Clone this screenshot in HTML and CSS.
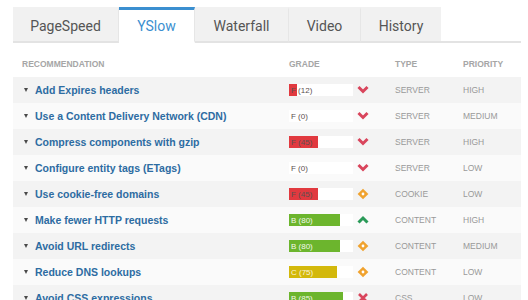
FILE: index.html
```html
<!DOCTYPE html>
<html>
<head>
<meta charset="utf-8">
<link rel="stylesheet" href="styles.css">
</head>
<body>
<div class="page">
  <div class="tabs">
    <div class="tab">PageSpeed</div>
    <div class="tab active">YSlow</div>
    <div class="tab">Waterfall</div>
    <div class="tab">Video</div>
    <div class="tab">History</div>
  </div>
  <div class="table">
    <div class="row head">
      <div class="c-rec">RECOMMENDATION</div>
      <div>GRADE</div>
      <div></div>
      <div>TYPE</div>
      <div>PRIORITY</div>
    </div>

    <div class="row odd">
      <div class="c-rec"><span class="tri"></span><span class="name">Add Expires headers</span></div>
      <div class="bar g-f"><span class="fill" style="width:12%"></span><span class="lbl">F (12)</span></div>
      <div class="ico"><svg width="12" height="10" viewBox="0 0 12 10"><path d="M1.5 2 L6 6.5 L10.5 2" stroke="#d9455c" stroke-width="3" fill="none"/></svg></div>
      <div class="typ">SERVER</div>
      <div class="typ">HIGH</div>
    </div>
    <div class="row even">
      <div class="c-rec"><span class="tri"></span><span class="name">Use a Content Delivery Network (CDN)</span></div>
      <div class="bar g-f"><span class="fill" style="width:0%"></span><span class="lbl">F (0)</span></div>
      <div class="ico"><svg width="12" height="10" viewBox="0 0 12 10"><path d="M1.5 2 L6 6.5 L10.5 2" stroke="#d9455c" stroke-width="3" fill="none"/></svg></div>
      <div class="typ">SERVER</div>
      <div class="typ">MEDIUM</div>
    </div>
    <div class="row odd">
      <div class="c-rec"><span class="tri"></span><span class="name">Compress components with gzip</span></div>
      <div class="bar g-f"><span class="fill" style="width:45%"></span><span class="lbl">F (45)</span></div>
      <div class="ico"><svg width="12" height="10" viewBox="0 0 12 10"><path d="M1.5 2 L6 6.5 L10.5 2" stroke="#d9455c" stroke-width="3" fill="none"/></svg></div>
      <div class="typ">SERVER</div>
      <div class="typ">HIGH</div>
    </div>
    <div class="row even">
      <div class="c-rec"><span class="tri"></span><span class="name">Configure entity tags (ETags)</span></div>
      <div class="bar g-f"><span class="fill" style="width:0%"></span><span class="lbl">F (0)</span></div>
      <div class="ico"><svg width="12" height="10" viewBox="0 0 12 10"><path d="M1.5 2 L6 6.5 L10.5 2" stroke="#d9455c" stroke-width="3" fill="none"/></svg></div>
      <div class="typ">SERVER</div>
      <div class="typ">LOW</div>
    </div>
    <div class="row odd">
      <div class="c-rec"><span class="tri"></span><span class="name">Use cookie-free domains</span></div>
      <div class="bar g-f"><span class="fill" style="width:45%"></span><span class="lbl">F (45)</span></div>
      <div class="ico"><svg width="12" height="12" viewBox="0 0 12 12"><rect x="2.2" y="2.2" width="7.6" height="7.6" transform="rotate(45 6 6)" fill="#f0a22e"/><circle cx="6" cy="6" r="1.4" fill="#fff"/></svg></div>
      <div class="typ">COOKIE</div>
      <div class="typ">LOW</div>
    </div>
    <div class="row even">
      <div class="c-rec"><span class="tri"></span><span class="name">Make fewer HTTP requests</span></div>
      <div class="bar g-b"><span class="fill" style="width:80%"></span><span class="lbl">B (80)</span></div>
      <div class="ico"><svg width="12" height="10" viewBox="0 0 12 10"><path d="M1.5 7.5 L6 3 L10.5 7.5" stroke="#2a9a58" stroke-width="3" fill="none"/></svg></div>
      <div class="typ">CONTENT</div>
      <div class="typ">HIGH</div>
    </div>
    <div class="row odd">
      <div class="c-rec"><span class="tri"></span><span class="name">Avoid URL redirects</span></div>
      <div class="bar g-b"><span class="fill" style="width:80%"></span><span class="lbl">B (80)</span></div>
      <div class="ico"><svg width="12" height="12" viewBox="0 0 12 12"><rect x="2.2" y="2.2" width="7.6" height="7.6" transform="rotate(45 6 6)" fill="#f0a22e"/><circle cx="6" cy="6" r="1.4" fill="#fff"/></svg></div>
      <div class="typ">CONTENT</div>
      <div class="typ">MEDIUM</div>
    </div>
    <div class="row even">
      <div class="c-rec"><span class="tri"></span><span class="name">Reduce DNS lookups</span></div>
      <div class="bar g-c"><span class="fill" style="width:75%"></span><span class="lbl">C (75)</span></div>
      <div class="ico"><svg width="12" height="12" viewBox="0 0 12 12"><rect x="2.2" y="2.2" width="7.6" height="7.6" transform="rotate(45 6 6)" fill="#f0a22e"/><circle cx="6" cy="6" r="1.4" fill="#fff"/></svg></div>
      <div class="typ">CONTENT</div>
      <div class="typ">LOW</div>
    </div>
    <div class="row odd">
      <div class="c-rec"><span class="tri"></span><span class="name">Avoid CSS expressions</span></div>
      <div class="bar g-b"><span class="fill" style="width:85%"></span><span class="lbl">B (85)</span></div>
      <div class="ico"><svg width="12" height="12" viewBox="0 0 12 12"><path d="M2 2 L10 10 M10 2 L2 10" stroke="#d9455c" stroke-width="2.6" fill="none"/></svg></div>
      <div class="typ">CSS</div>
      <div class="typ">LOW</div>
    </div>
  </div>
</div>
</body>
</html>
```

FILE: styles.css
```css
* { box-sizing: border-box; }
html, body { margin: 0; padding: 0; background: #fff; }
body { font-family: "Liberation Sans", Arial, sans-serif; overflow: hidden; }

.page {
  padding: 7px 7px 0 13px;
}

.tabs {
  display: flex;
  height: 36px;
  border-bottom: 2px solid #e3e3e3;
}
.tab {
  height: 36px;
  margin-bottom: -2px;
  padding: 3px 19px 0;
  display: flex;
  align-items: center;
  background: #f1f1f1;
  border-top: 3px solid #f1f1f1;
  border-right: 1px solid #e6e6e6;
  font-family: Roboto, "Liberation Sans", sans-serif;
  font-size: 14px;
  color: #555;
  padding-bottom: 3px;
  border-bottom: 2px solid #e3e3e3;
}
.tab:nth-child(1) { width: 106px; justify-content: center; padding: 0; }
.tab:nth-child(2) { width: 76px; justify-content: center; padding: 0; }
.tab:nth-child(3) { width: 94px; justify-content: center; padding: 0; }
.tab:nth-child(4) { width: 72px; justify-content: center; padding: 0; }
.tab:nth-child(5) { width: 80px; justify-content: center; padding: 0; border-right: none; }
.tab.active {
  background: #fff;
  border-top-color: #3b8fd0;
  border-bottom-color: #fff;
  color: #3b8fd0;
}

.table { }

.row {
  display: grid;
  grid-template-columns: 276px 64px 42px 68px 1fr;
  align-items: center;
  height: 26px;
}
.row.head {
  height: 34px;
  align-items: end;
  padding-bottom: 8px;
  font-size: 8.5px;
  font-weight: bold;
  color: #a6a6a6;
}
.row.head .c-rec { padding-left: 9px; }

.row.odd { background: #f3f3f3; }
.row.even { background: #fafafa; }

.c-rec {
  display: flex;
  align-items: center;
  padding-left: 11px;
}
.tri {
  width: 0; height: 0;
  border-left: 2.5px solid transparent;
  border-right: 2.5px solid transparent;
  border-top: 4px solid #4a4a4a;
  margin-right: 7px;
}
.name {
  font-size: 10.5px;
  font-weight: bold;
  color: #2d6ca2;
}

.bar {
  position: relative;
  height: 12px;
  background: #fff;
  display: flex;
  align-items: center;
}
.bar .fill {
  position: absolute;
  left: 0; top: 0; bottom: 0;
}
.bar .lbl {
  position: relative;
  padding-left: 2px;
  font-size: 8px;
  color: #555;
}
.g-f .fill { background: #e1393f; }
.g-f .lbl { color: #5c5050; }
.g-b .fill { background: #6cb52d; }
.g-b .lbl { color: #f2f7ea; }
.g-c .fill { background: #d3b80b; }
.g-c .lbl { color: #fbf6dc; }

.ico {
  padding-left: 4px;
  display: flex;
  align-items: center;
}
.ico svg { display: block; }

.typ {
  font-size: 8.5px;
  color: #999;
}
```
